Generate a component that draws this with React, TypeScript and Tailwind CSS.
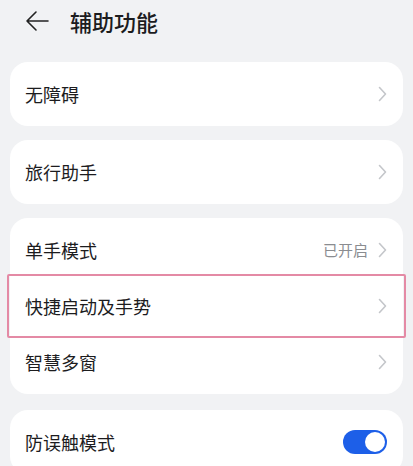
import React from 'react';

const Chevron = () => (
  <svg width="9" height="16" viewBox="0 0 9 16" fill="none" className="shrink-0">
    <path d="M1.5 1.5 L7.5 8 L1.5 14.5" stroke="#c4c6ca" strokeWidth="1.6" strokeLinecap="round" strokeLinejoin="round" />
  </svg>
);

type Row = { label: string; value?: string; highlight?: boolean };

const SettingRow: React.FC<Row> = ({ label, value, highlight }) => (
  <div className="relative flex h-14 items-center justify-between pl-[15px] pr-[16px]">
    <span className="text-[18px] text-[#1c1c1e]">{label}</span>
    <div className="flex items-center gap-[10px]">
      {value && <span className="text-[15px] text-[#8a8c90]">{value}</span>}
      <Chevron />
    </div>
    {highlight && (
      <div className="pointer-events-none absolute -left-[3px] -right-[3px] -top-[4px] -bottom-[4px] rounded-[2px] border-2 border-[#e48aa5]" />
    )}
  </div>
);

const Card: React.FC<{ children: React.ReactNode }> = ({ children }) => (
  <div className="rounded-[18px] bg-white py-1">{children}</div>
);

export default function App() {
  return (
    <div
      className="h-[466px] w-[413px] overflow-hidden bg-[#f1f2f4]"
      style={{ fontFamily: '"Noto Sans CJK SC", "Noto Sans", sans-serif' }}
    >
      <div className="flex h-[42px] items-center pl-[25px]">
        <svg width="24" height="22" viewBox="0 0 24 22" fill="none">
          <path d="M23 11 H2 M11 2 L2 11 L11 20" stroke="#222" strokeWidth="1.6" strokeLinecap="round" strokeLinejoin="round" />
        </svg>
        <h1 className="ml-[21px] text-[22px] font-medium text-[#1c1c1e]">辅助功能</h1>
      </div>

      <div className="flex flex-col gap-[14px] px-[10px] pt-5">
        <Card>
          <SettingRow label="无障碍" />
        </Card>
        <Card>
          <SettingRow label="旅行助手" />
        </Card>
        <Card>
          <SettingRow label="单手模式" value="已开启" />
          <SettingRow label="快捷启动及手势" highlight />
          <SettingRow label="智慧多窗" />
        </Card>
        <div className="mt-[2px] rounded-[18px] bg-white py-1">
          <div className="flex h-14 items-center justify-between pl-[15px] pr-[16px]">
            <span className="text-[18px] text-[#1c1c1e]">防误触模式</span>
            <div className="flex h-6 w-11 items-center justify-end rounded-full bg-[#1d5fe8] p-[2px]">
              <div className="h-5 w-5 rounded-full bg-white" />
            </div>
          </div>
        </div>
      </div>
    </div>
  );
}
